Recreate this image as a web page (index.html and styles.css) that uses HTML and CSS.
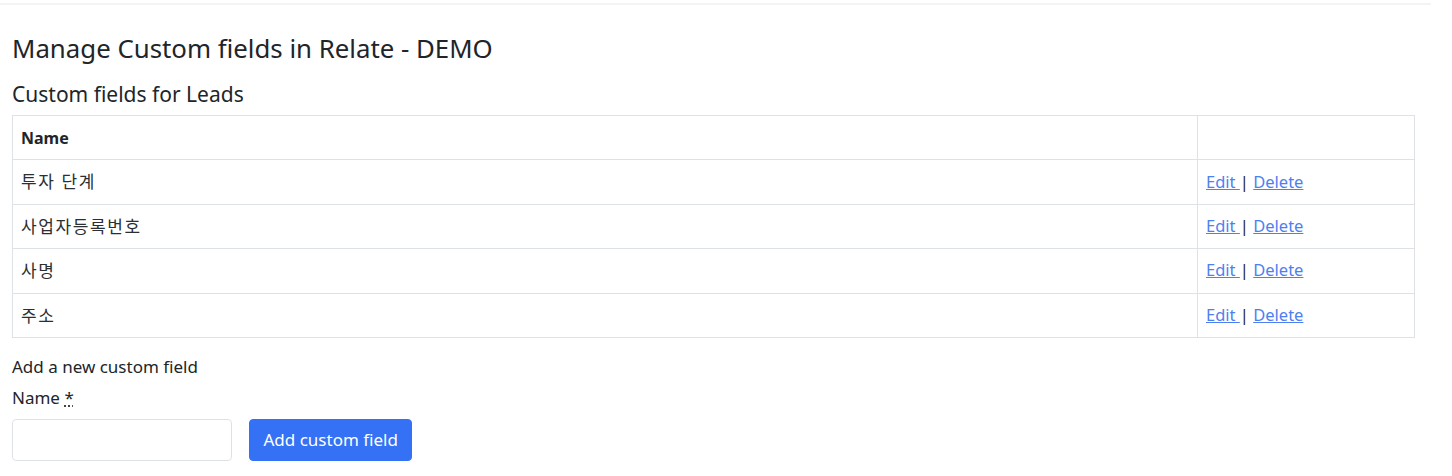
FILE: index.html
```html
<!DOCTYPE html>
<html lang="ko">
<head>
<meta charset="utf-8">
<title>Manage Custom fields</title>
<link rel="stylesheet" href="styles.css">
</head>
<body>
<div class="topbar"></div>
<main class="page">
  <h1 class="title">Manage Custom fields in Relate - DEMO</h1>
  <h2 class="subtitle">Custom fields for Leads</h2>
  <table class="fields">
    <thead>
      <tr><th class="col-name">Name</th><th class="col-actions"></th></tr>
    </thead>
    <tbody>
      <tr><td class="ko">투자 단계</td><td class="actions"><a href="#">Edit </a>| <a href="#">Delete</a></td></tr>
      <tr><td class="ko">사업자등록번호</td><td class="actions"><a href="#">Edit </a>| <a href="#">Delete</a></td></tr>
      <tr><td class="ko">사명</td><td class="actions"><a href="#">Edit </a>| <a href="#">Delete</a></td></tr>
      <tr><td class="ko">주소</td><td class="actions"><a href="#">Edit </a>| <a href="#">Delete</a></td></tr>
    </tbody>
  </table>
  <p class="add-title">Add a new custom field</p>
  <form class="add-form">
    <label class="label" for="name">Name <abbr title="required">*</abbr></label>
    <div class="row">
      <input id="name" class="input" type="text">
      <button class="btn" type="button">Add custom field</button>
    </div>
  </form>
</main>
</body>
</html>
```

FILE: styles.css
```css
* { box-sizing: border-box; }
html, body { margin: 0; padding: 0; background: #fff; }
body {
  font-family: "Noto Sans", "Noto Sans CJK KR", sans-serif;
  color: #212529;
  font-size: 16px;
  line-height: 1.5;
}
.topbar {
  height: 5px;
  width: 1431px;
  border-bottom: 2px solid #f3f3f4;
}
.page {
  width: 1415px;
  padding: 0 0 0 12px;
}
.title {
  margin: 26px 0 0 0;
  font-weight: 400;
  font-size: 25.8px;
  line-height: 34px;
}
.subtitle {
  margin: 15px 0 0 0;
  font-weight: 400;
  font-size: 21px;
  line-height: 28px;
}
.fields {
  width: 100%;
  border-collapse: collapse;
  margin-top: 7px;
}
.fields th, .fields td {
  border: 1px solid #dee2e6;
  padding: 0 8px;
  text-align: left;
  height: 44.4px;
  vertical-align: middle;
}
.fields th { font-weight: 700; }
.fields td.ko {
  font-size: 17px;
  letter-spacing: 1.6px;
  color: #2b2f33;
}
.fields td.actions { font-size: 16.5px; }
.col-actions { width: 217px; }
.fields a { color: #4e7ff0; text-decoration: underline; }
.add-title { margin: 16px 0 0 0; font-size: 17px; }
.label { display: block; margin-top: 6px; font-size: 17px; }
.label abbr { text-decoration: underline dotted; cursor: help; }
.row { display: flex; gap: 17px; margin-top: 8px; }
.input {
  width: 220px;
  height: 42px;
  border: 1px solid #dee2e6;
  border-radius: 4px;
  font: inherit;
}
.btn {
  height: 42px;
  padding: 0 13.5px;
  background: #3471f5;
  color: #fff;
  border: 1px solid #3471f5;
  border-radius: 4px;
  font: inherit;
  font-size: 17px;
}
```
